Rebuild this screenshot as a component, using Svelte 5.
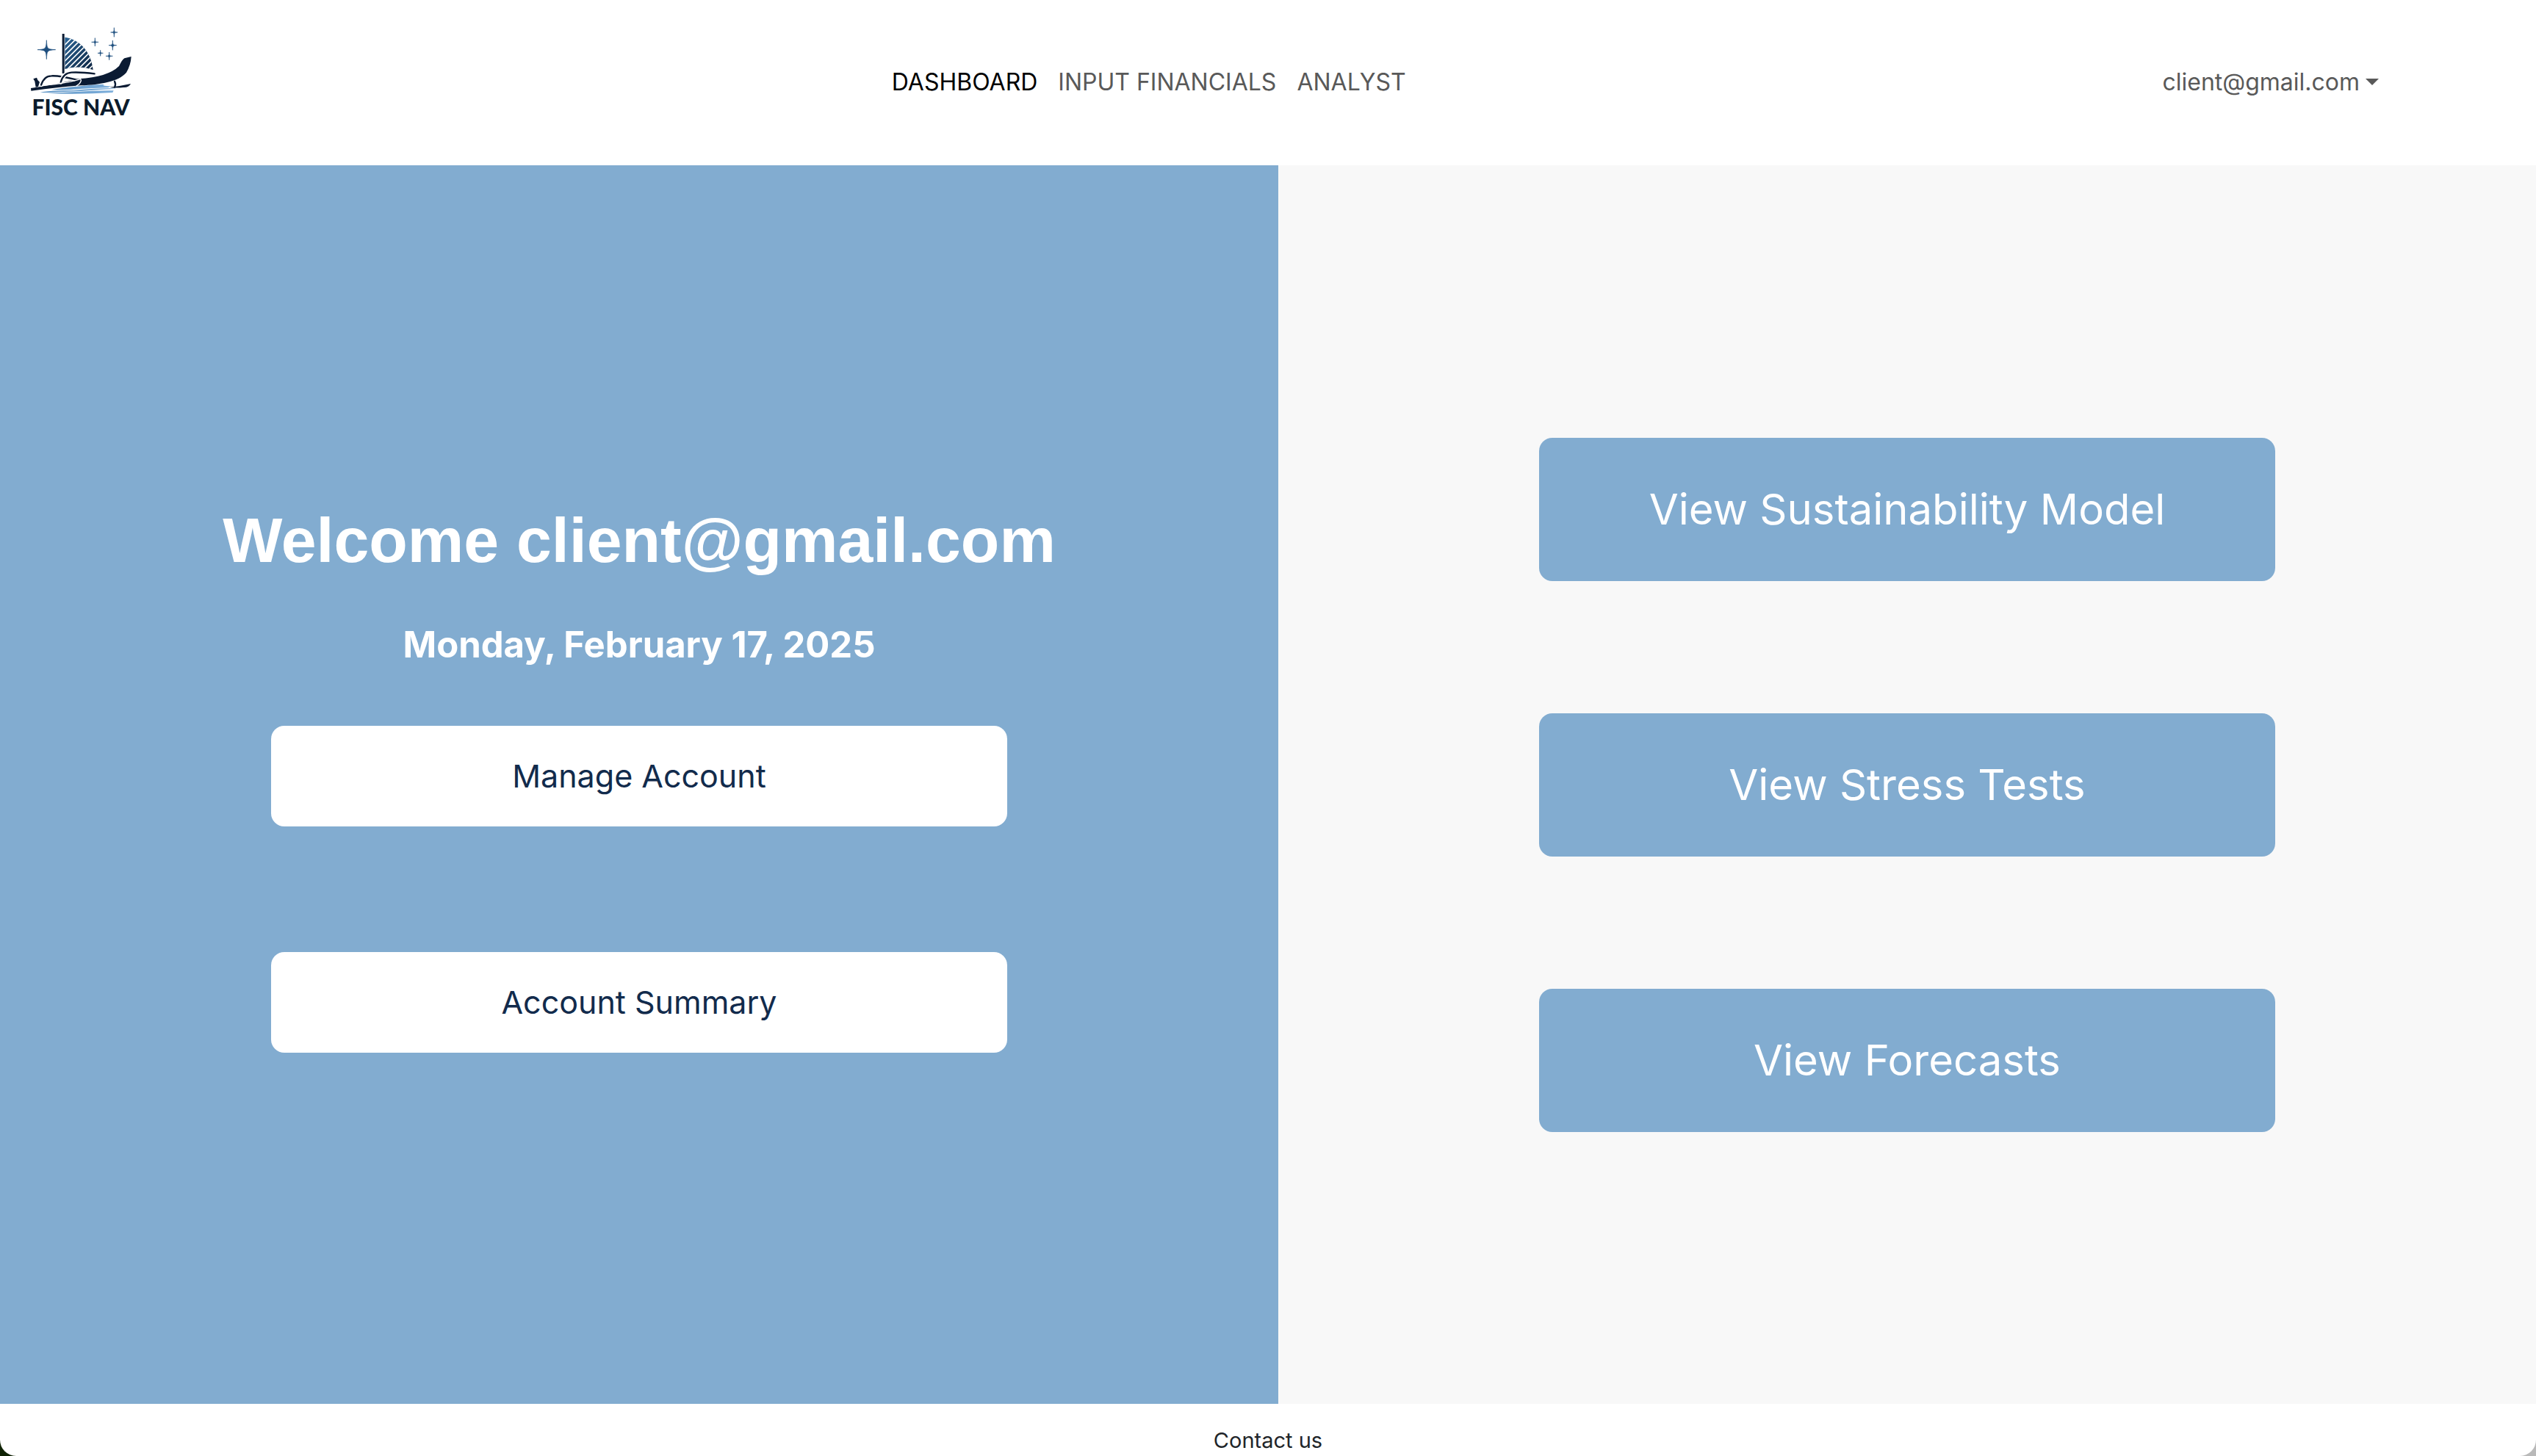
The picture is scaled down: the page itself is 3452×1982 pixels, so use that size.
<script>
  const links = [
    { label: 'DASHBOARD', active: true },
    { label: 'INPUT FINANCIALS', active: false },
    { label: 'ANALYST', active: false },
  ];
  const email = 'client@gmail.com';
  const accountActions = ['Manage Account', 'Account Summary'];
  const views = ['View Sustainability Model', 'View Stress Tests', 'View Forecasts'];
  const stars = [
    { x: 130, y: 143, rx: 37, ry: 39 },
    { x: 406, y: 72, rx: 14, ry: 19 },
    { x: 328, y: 112, rx: 14, ry: 17 },
    { x: 400, y: 125, rx: 16, ry: 20 },
    { x: 350, y: 157, rx: 11, ry: 12 },
    { x: 386, y: 169, rx: 14, ry: 16 },
  ];
  // Four-pointed star: each side curves in towards the centre.
  const star = ({ x, y, rx, ry }) => {
    const a = rx * 0.06;
    const b = ry * 0.06;
    return (
      `M${x} ${y - ry}C${x + a} ${y - b} ${x + a} ${y - b} ${x + rx} ${y}` +
      `C${x + a} ${y + b} ${x + a} ${y + b} ${x} ${y + ry}` +
      `C${x - a} ${y + b} ${x - a} ${y + b} ${x - rx} ${y}` +
      `C${x - a} ${y - b} ${x - a} ${y - b} ${x} ${y - ry}Z`
    );
  };
</script>

<div class="page">
  <header>
    <a class="brand" href="#home" aria-label="Fisc Nav home">
      <svg viewBox="60 45 432 405" aria-hidden="true">
        <defs>
          <linearGradient id="sail" x1="0" y1="0" x2="1" y2="1">
            <stop offset="0" stop-color="#2c6596" />
            <stop offset="1" stop-color="#0d2440" />
          </linearGradient>
          <linearGradient id="water" x1="0" y1="0" x2="1" y2="0">
            <stop offset="0" stop-color="#5b93c4" />
            <stop offset="1" stop-color="#7fb0dc" />
          </linearGradient>
          <clipPath id="sail-shape">
            <path d="M205 92C268 102 312 152 320 225Q262 206 205 222Z" />
          </clipPath>
        </defs>
        {#each stars as s}
          <path d={star(s)} fill="#1d4e7e" stroke="#1d4e7e" stroke-width="2" />
        {/each}
        <path d="M205 92C268 102 312 152 320 225Q262 206 205 222Z" fill="url(#sail)" />
        <g clip-path="url(#sail-shape)" stroke="#fff" stroke-width="5">
          <path d="M200 128L240 88M200 150L262 88M200 172L284 88M200 194L306 88M200 216L328 88M212 226L350 88M234 226L372 88M256 226L394 88M278 226L416 88M300 226L438 88" />
        </g>
        <path d="M194 78H203V240H194Z" fill="#0b1b33" />
        <path d="M150 307Q200 298 268 292Q320 285 366 284Q350 290 392 292L382 298Q300 300 230 306Q190 308 150 307Z" fill="url(#water)" />
        <path d="M104 317Q150 309 240 309Q320 300 416 300Q400 304 350 306Q250 314 180 316Q140 319 104 317Z" fill="url(#water)" />
        <path d="M132 321Q190 318 250 315Q330 309 404 310L400 318Q260 327 132 321Z" fill="url(#water)" />
        <path d="M66 300Q160 287 262 262Q380 255 426 210Q440 182 448 178L476 171Q474 206 456 236C424 274 350 285 270 289Q180 296 67 311Z" fill="#0b1b33" />
        <path d="M82 272L76 262L90 257L94 267L102 275L96 294L86 296Z" fill="#0b1b33" />
        <g fill="none" stroke-linecap="round">
          <path d="M108 287Q120 250 150 250Q180 248 244 264" stroke="#fff" stroke-width="15" />
          <path d="M108 287Q120 250 150 250Q180 248 258 267" stroke="#0b1b33" stroke-width="7" />
          <path d="M188 276Q198 238 232 236Q270 234 326 241" stroke="#fff" stroke-width="16" />
          <path d="M188 276Q198 238 232 236Q270 234 326 241" stroke="#0b1b33" stroke-width="7" />
          <path d="M118 289Q220 279 268 263Q276 266 264 282L252 291" stroke="#fff" stroke-width="4" />
          <path d="M408 272Q414 284 408 296" stroke="#0b1b33" stroke-width="7" />
        </g>
        <path d="M388 296Q430 292 474 282Q466 298 444 297Q410 301 388 296Z" fill="#0b1b33" />
        <text x="270" y="411" text-anchor="middle" class="wordmark">FISC NAV</text>
      </svg>
    </a>
    <nav>
      {#each links as link}
        <a href="#{link.label.toLowerCase().replace(' ', '-')}" class:active={link.active}>{link.label}</a>
      {/each}
    </nav>
    <button class="user" type="button" aria-haspopup="menu">{email}<span class="caret"></span></button>
  </header>

  <main>
    <section class="welcome">
      <h1>Welcome {email}</h1>
      <h2>Monday, February 17, 2025</h2>
      <div class="actions">
        {#each accountActions as label}
          <button type="button">{label}</button>
        {/each}
      </div>
    </section>
    <section class="views">
      {#each views as label}
        <button type="button">{label}</button>
      {/each}
    </section>
  </main>

  <footer><a href="#contact">Contact us</a></footer>
</div>

<style>
  :global(body) {
    background: linear-gradient(90deg, #102305 50%, #b9b9b9 50%);
  }
  .page {
    box-sizing: border-box;
    min-height: 100vh;
    display: flex;
    flex-direction: column;
    background: #fff;
    border-radius: 0 0 22px 22px;
    overflow: hidden;
    font-family: Inter, "Liberation Sans", sans-serif;
    color: #212529;
  }
  a {
    color: inherit;
    text-decoration: none;
  }
  button {
    border: 0;
    font: inherit;
    cursor: pointer;
  }
  header {
    box-sizing: border-box;
    height: 225px;
    display: flex;
    justify-content: space-between;
    align-items: center;
    padding: 0 214px 2px 40px;
  }
  .brand {
    align-self: flex-start;
    margin-top: 35px;
    width: 144px;
  }
  .brand svg {
    display: block;
    width: 100%;
  }
  .wordmark {
    font-family: Lato, sans-serif;
    font-weight: 900;
    font-size: 90px;
    fill: #0b1b2c;
  }
  nav {
    display: flex;
    gap: 28px;
    font-size: 32px;
    line-height: 48px;
    color: #595959;
  }
  .active {
    color: #000;
  }
  .user {
    display: flex;
    align-items: center;
    gap: 8px;
    padding: 0;
    background: none;
    font-size: 32px;
    line-height: 48px;
    color: #595959;
  }
  .caret {
    border: 9px solid transparent;
    border-top-color: currentColor;
    border-bottom: 0;
  }
  main {
    flex: 1;
    display: grid;
    grid-template-columns: 1740fr 1712fr;
  }
  section {
    display: flex;
    flex-direction: column;
    align-items: center;
    justify-content: center;
  }
  .welcome {
    background: #82acd0;
    padding-bottom: 22px;
    color: #fff;
  }
  h1,
  h2 {
    margin: 0;
  }
  h1 {
    font-family: "Liberation Sans", sans-serif;
    font-size: 86px;
    line-height: 106px;
  }
  h2 {
    margin: 60px 0 80px;
    font-size: 49px;
    line-height: 60px;
  }
  .actions {
    width: 100%;
    display: flex;
    flex-direction: column;
    align-items: center;
    gap: 171px;
  }
  .actions button,
  .views button {
    width: 1002px;
    max-width: 90%;
    border-radius: 18px;
  }
  .actions button {
    padding: 35px;
    background: #fff;
    color: #122b4c;
    font-size: 43px;
    line-height: 67px;
  }
  .views {
    gap: 180px;
    background: #f8f8f8;
  }
  .views button {
    padding: 53px;
    background: #82acd0;
    color: #fff;
    font-size: 58px;
    line-height: 89px;
  }
  footer {
    display: flex;
    justify-content: center;
    padding: 29px 0 0;
    font-size: 29px;
    line-height: 42px;
  }
</style>
